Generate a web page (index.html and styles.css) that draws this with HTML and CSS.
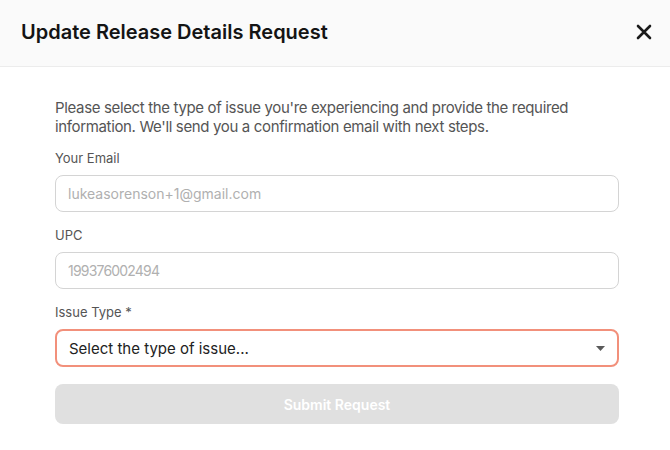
FILE: index.html
```html
<!DOCTYPE html>
<html>
    <head>
        <link rel="stylesheet" href="styles.css">
        <title>Update Release Details Request</title>
    </head>
    <body>
        <div class="modal">
            <div class="modal-header">
                <h2>Update Release Details Request</h2>
                <button class="close" type="button" aria-label="Close">
                    <svg width="16" height="16" viewBox="0 0 16 16">
                        <path d="M2 2 L14 14 M14 2 L2 14" stroke="#1a1a1a" stroke-width="2.6" stroke-linecap="round"/>
                    </svg>
                </button>
            </div>

            <form class="modal-body">
                <p class="intro">Please select the type of issue you're experiencing and provide the required information. We'll send you a confirmation email with next steps.</p>

                <label class="field">
                    <span class="label">Your Email</span>
                    <input type="text" placeholder="lukeasorenson+1@gmail.com">
                </label>

                <label class="field">
                    <span class="label">UPC</span>
                    <input class="digits" type="text" placeholder="199376002494">
                </label>

                <label class="field">
                    <span class="label">Issue Type *</span>
                    <div class="select">
                        <span>Select the type of issue...</span>
                        <svg width="9" height="5" viewBox="0 0 9 5">
                            <path d="M0 0 H9 L4.5 5 Z" fill="#5a5a5a"/>
                        </svg>
                    </div>
                </label>

                <button class="submit" type="button" disabled>Submit Request</button>
            </form>
        </div>
    </body>
</html>
```

FILE: styles.css
```css
html {
    height: 100%;
}
body {
    margin: 0px;
    height: 100%;
    background-color: #fff;
    font-family: Inter, "Noto Sans", sans-serif;
    color: #1a1a1a;
}

.modal-header {
    display: flex;
    align-items: center;
    justify-content: space-between;
    box-sizing: border-box;
    height: 67px;
    padding: 0 18px 3px 21px;
    background-color: #fafafa;
    border-bottom: 1px solid #ececec;
}
.modal-header h2 {
    margin: 0px;
    font-size: 20px;
    font-weight: 600;
    color: #141414;
}
.close {
    background: none;
    border: none;
    padding: 0;
    display: flex;
    cursor: pointer;
}

.modal-body {
    padding: 31px 51px 0 55px;
}
.intro {
    margin: 0 0 14px 0;
    font-size: 15px;
    line-height: 19px;
    letter-spacing: -0.35px;
    color: #555;
}

.field {
    display: block;
    margin-bottom: 15px;
}
.label {
    display: block;
    font-size: 13px;
    line-height: 17px;
    color: #555;
    margin-bottom: 8px;
}
.field input {
    display: block;
    box-sizing: border-box;
    width: 100%;
    height: 37px;
    padding: 0 12px;
    border: 1px solid #d4d4d4;
    border-radius: 8px;
    font-family: inherit;
    font-size: 14px;
    color: #333;
    outline: none;
}
.field input::placeholder {
    color: #b0b0b0;
}
.field input.digits {
    letter-spacing: -0.8px;
}

.select {
    display: flex;
    align-items: center;
    justify-content: space-between;
    box-sizing: border-box;
    height: 38px;
    padding: 0 12px 0 12px;
    border: 2px solid #f2907b;
    border-radius: 8px;
    font-size: 15px;
    color: #222;
}

.submit {
    display: block;
    width: 100%;
    height: 40px;
    margin-top: 17px;
    border: none;
    border-radius: 8px;
    background-color: #e0e0e0;
    color: #fff;
    font-family: inherit;
    font-size: 14px;
    font-weight: 600;
}
```
